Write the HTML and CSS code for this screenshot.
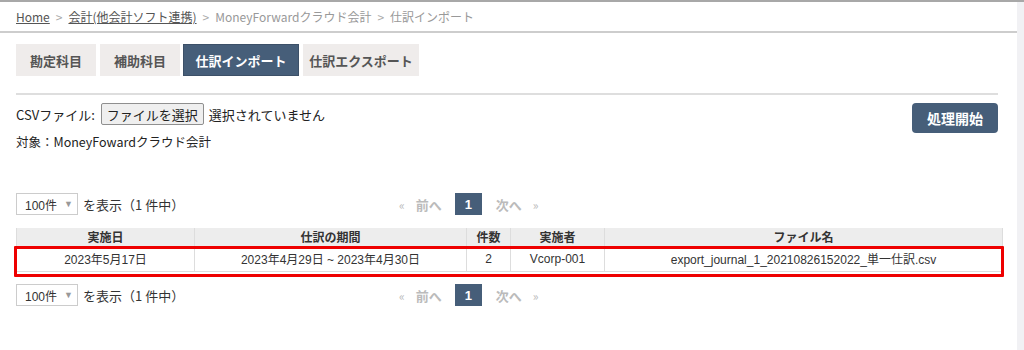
FILE: index.html
```html
<!DOCTYPE html>
<html lang="ja">
<head>
<meta charset="utf-8">
<link rel="stylesheet" href="styles.css">
</head>
<body>
<div class="page">
  <div class="main">
    <div class="crumbs">
      <a href="#" class="crumb-link">Home</a><span class="sep">&gt;</span><a href="#" class="crumb-link">会計(他会計ソフト連携)</a><span class="sep">&gt;</span><span>MoneyForwardクラウド会計</span><span class="sep">&gt;</span><span>仕訳インポート</span>
    </div>
    <div class="tabs">
      <div class="tab">勘定科目</div>
      <div class="tab">補助科目</div>
      <div class="tab active">仕訳インポート</div>
      <div class="tab">仕訳エクスポート</div>
    </div>
    <div class="form">
      <div class="form-left">
        <div class="file-row"><span>CSVファイル:</span><span class="file-btn">ファイルを選択</span><span>選択されていません</span></div>
        <div class="target">対象：MoneyFowardクラウド会計</div>
      </div>
      <div class="run-btn">処理開始</div>
    </div>
    <div class="pager-row">
      <div class="per-page"><span class="select">100件<span class="arrow">▼</span></span><span>を表示（1 件中）</span></div>
      <div class="pager"><span class="pg">«</span><span class="pg">前へ</span><span class="cur">1</span><span class="pg">次へ</span><span class="pg">»</span></div>
    </div>
    <div class="table-wrap">
      <table class="grid">
        <colgroup>
          <col class="c1"><col class="c2"><col class="c3"><col class="c4"><col class="c5">
        </colgroup>
        <thead>
          <tr><th>実施日</th><th>仕訳の期間</th><th>件数</th><th>実施者</th><th>ファイル名</th></tr>
        </thead>
        <tbody>
          <tr><td>2023年5月17日</td><td>2023年4月29日 ~ 2023年4月30日</td><td>2</td><td>Vcorp-001</td><td>export_journal_1_20210826152022_単一仕訳.csv</td></tr>
        </tbody>
      </table>
      <div class="highlight"></div>
    </div>
    <div class="pager-row bottom">
      <div class="per-page"><span class="select">100件<span class="arrow">▼</span></span><span>を表示（1 件中）</span></div>
      <div class="pager"><span class="pg">«</span><span class="pg">前へ</span><span class="cur">1</span><span class="pg">次へ</span><span class="pg">»</span></div>
    </div>
  </div>
  <div class="scrollbar"></div>
</div>
</body>
</html>
```

FILE: styles.css
```css
html, body {
  margin: 0;
  padding: 0;
  background: #ffffff;
}
body {
  font-family: "Noto Sans CJK JP", "Liberation Sans", sans-serif;
  color: #333;
  font-size: 13px;
  height: 350px;
  overflow: hidden;
}
.page {
  display: flex;
  height: 350px;
  border-top: 2px solid #a8a8a8;
  box-sizing: border-box;
}
.main {
  flex: 1;
}
.scrollbar {
  width: 7px;
  background: #f1f1f4;
}
.crumbs {
  height: 31px;
  display: flex;
  align-items: center;
  padding-left: 16px;
  font-size: 12px;
  color: #999;
  border-bottom: 2px solid #cdcdcd;
  box-sizing: border-box;
}
.crumb-link {
  color: #555;
  text-decoration: underline;
}
.sep {
  margin: 0 6px;
  color: #aaa;
}
.tabs {
  display: flex;
  gap: 4px;
  margin: 11px 0 0 16px;
}
.tab {
  height: 32px;
  width: 80px;
  display: flex;
  align-items: center;
  justify-content: center;
  background: #efeceb;
  color: #555;
  font-weight: bold;
  font-size: 13px;
}
.tab:nth-child(3), .tab:nth-child(4) {
  width: 116px;
}
.tab:nth-child(3) {
  margin-left: -1px;
}
.tab.active {
  background: #465e79;
  color: #fff;
  border: 1px solid #3c5068;
  box-sizing: border-box;
}
.form {
  margin: 17px 19px 0 16px;
  padding-top: 8px;
  border-top: 2px solid #dedede;
  display: flex;
  justify-content: space-between;
  align-items: flex-start;
}
.form-left {
  display: flex;
  flex-direction: column;
}
.file-row {
  display: flex;
  align-items: center;
  gap: 5px;
  height: 22px;
  font-size: 13px;
  color: #222;
}
.file-btn {
  border: 1px solid #8f8f8f;
  background: #efefef;
  border-radius: 2px;
  height: 20px;
  padding: 0 5px;
  display: flex;
  align-items: center;
  margin-left: 1px;
}
.target {
  margin-top: 6px;
  height: 22px;
  line-height: 22px;
  font-size: 12.5px;
  color: #222;
}
.run-btn {
  width: 86px;
  height: 30px;
  background: #465e79;
  color: #fff;
  border-radius: 4px;
  display: flex;
  align-items: center;
  justify-content: center;
  font-weight: bold;
  font-size: 14px;
}
.pager-row {
  display: flex;
  align-items: center;
  margin: 40px 0 0 16px;
  height: 22px;
}
.pager-row.bottom {
  margin-top: 12px;
}
.per-page {
  display: flex;
  align-items: center;
  gap: 5px;
  width: 380px;
  font-size: 13px;
  color: #333;
}
.select {
  border: 1px solid #ccc;
  display: flex;
  align-items: center;
  padding-left: 8px;
  box-sizing: border-box;
  width: 62px;
  height: 22px;
  font-family: "Liberation Sans", "Noto Sans CJK JP", sans-serif;
  font-size: 12px;
}
.arrow {
  font-size: 9px;
  color: #999;
  margin-left: 7px;
}
.pager {
  display: flex;
  align-items: center;
  color: #bbb;
  font-size: 13px;
  font-weight: bold;
}
.pg {
  margin-right: 11px;
}
.pg:first-child {
  margin-left: 3px;
  font-weight: normal;
  font-size: 12px;
}
.pg:last-child {
  font-weight: normal;
  font-size: 12px;
}
.pg:nth-child(2) {
  margin-right: 13px;
}
.cur {
  width: 27px;
  height: 22px;
  background: #465e79;
  color: #fff;
  display: flex;
  align-items: center;
  justify-content: center;
  margin-right: 14px;
  font-family: "Liberation Sans", sans-serif;
  font-size: 13px;
}
.table-wrap {
  margin: 13px 0 0 16px;
  width: 986px;
  position: relative;
}
.grid {
  width: 986px;
  border-collapse: collapse;
  table-layout: fixed;
  font-family: "Liberation Sans", "Noto Sans CJK JP", sans-serif;
  font-size: 12px;
  color: #333;
}
.c1 { width: 178px; }
.c2 { width: 272px; }
.c3 { width: 44px; }
.c4 { width: 94px; }
.c5 { width: 398px; }
.grid th {
  background: #ededed;
  height: 18px;
  padding: 0;
  font-weight: bold;
  border-left: 1px solid #ddd;
  border-right: 1px solid #ddd;
  font-family: "Noto Sans CJK JP", sans-serif;
  font-size: 12px;
  line-height: 18px;
}
.grid td {
  height: 25px;
  padding: 0;
  text-align: center;
  border: 1px solid #ddd;
  border-top: none;
}
.highlight {
  position: absolute;
  left: -2px;
  top: 18px;
  width: 990px;
  height: 31px;
  border: 3px solid #ee0000;
  box-sizing: border-box;
  border-radius: 1px;
}
```
